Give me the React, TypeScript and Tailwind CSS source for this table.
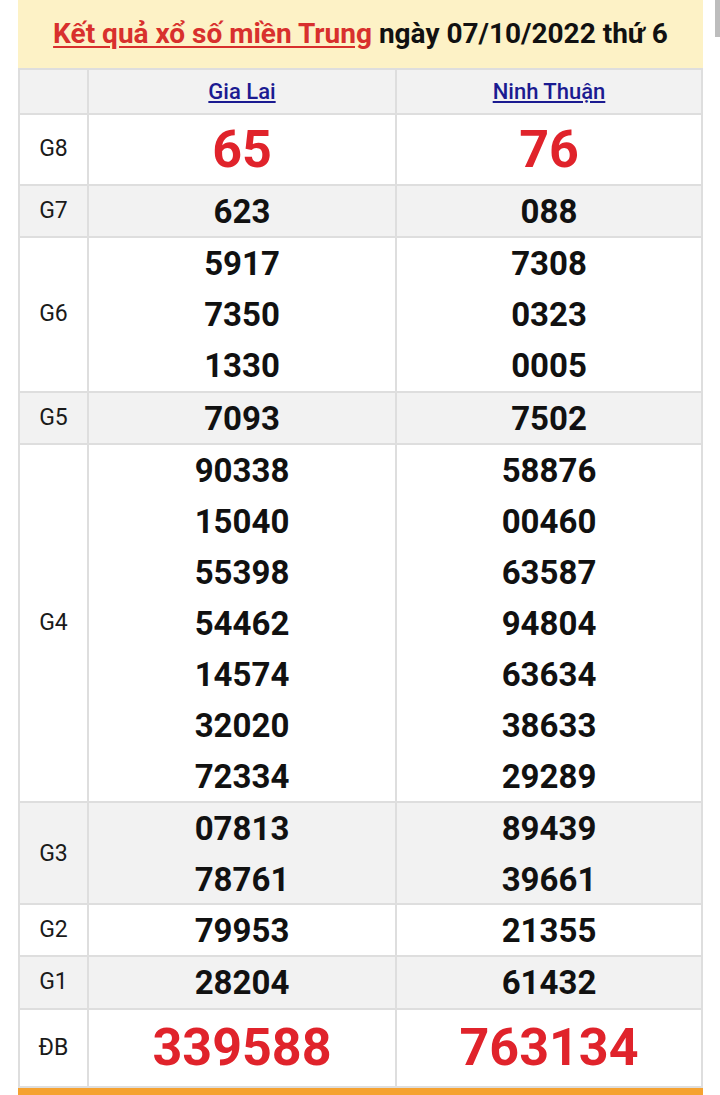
import React from 'react';

type Row = { label: string; a: string[]; b: string[]; kind: 'big' | 'normal'; h: string; bg: string };

const ROWS: Row[] = [
  { label: 'G8', a: ['65'], b: ['76'], kind: 'big', h: 'h-[71px]', bg: 'bg-white' },
  { label: 'G7', a: ['623'], b: ['088'], kind: 'normal', h: 'h-[52px]', bg: 'bg-[#f2f2f2]' },
  { label: 'G6', a: ['5917', '7350', '1330'], b: ['7308', '0323', '0005'], kind: 'normal', h: 'h-[155px]', bg: 'bg-white' },
  { label: 'G5', a: ['7093'], b: ['7502'], kind: 'normal', h: 'h-[52px]', bg: 'bg-[#f2f2f2]' },
  {
    label: 'G4',
    a: ['90338', '15040', '55398', '54462', '14574', '32020', '72334'],
    b: ['58876', '00460', '63587', '94804', '63634', '38633', '29289'],
    kind: 'normal',
    h: 'h-[358px]',
    bg: 'bg-white',
  },
  { label: 'G3', a: ['07813', '78761'], b: ['89439', '39661'], kind: 'normal', h: 'h-[102px]', bg: 'bg-[#f2f2f2]' },
  { label: 'G2', a: ['79953'], b: ['21355'], kind: 'normal', h: 'h-[52px]', bg: 'bg-white' },
  { label: 'G1', a: ['28204'], b: ['61432'], kind: 'normal', h: 'h-[53px]', bg: 'bg-[#f2f2f2]' },
  { label: 'ĐB', a: ['339588'], b: ['763134'], kind: 'big', h: 'h-[78px]', bg: 'bg-white' },
];

const Cell: React.FC<{ nums: string[]; kind: 'big' | 'normal'; last?: boolean }> = ({ nums, kind, last }) => (
  <div className={`flex flex-col items-center justify-center ${last ? '' : 'border-r-2 border-[#dedede]'}`}>
    {nums.map((n, i) =>
      kind === 'big' ? (
        <span key={i} className="text-[52px] leading-none font-bold text-[#e0232b]">{n}</span>
      ) : (
        <span key={i} className="text-[33px] leading-[51px] font-bold text-[#111]">{n}</span>
      )
    )}
  </div>
);

export default function App() {
  return (
    <div className="relative w-[720px] h-[1095px] bg-white overflow-hidden" style={{ fontFamily: 'Roboto, "Noto Sans", sans-serif' }}>
      <div className="absolute right-0 top-0 w-[5px] h-[37px] bg-[#bdbdbd]" />
      <div className="ml-[18px] w-[685px]">
        <div className="h-[68px] bg-[#fdf2c6] flex items-center justify-center">
          <h1 className="text-[28px] font-bold whitespace-nowrap">
            <a href="#" className="text-[#d8302d] underline underline-offset-[3px]">Kết quả xổ số miền Trung</a>
            <span className="text-[#111]"> ngày 07/10/2022 thứ 6</span>
          </h1>
        </div>
        <div className="border-l-2 border-r-2 border-[#dedede]">
          <div className="grid grid-cols-[69px_308px_1fr] h-[47px] bg-[#f2f2f2] border-b-2 border-t-2 border-[#dedede]">
            <div className="border-r-2 border-[#dedede]" />
            <div className="flex items-center justify-center border-r-2 border-[#dedede]">
              <a href="#" className="text-[22px] font-medium text-[#1b1b91] underline underline-offset-2">Gia Lai</a>
            </div>
            <div className="flex items-center justify-center">
              <a href="#" className="text-[22px] font-medium text-[#1b1b91] underline underline-offset-2">Ninh Thuận</a>
            </div>
          </div>
          {ROWS.map((r) => (
            <div key={r.label} className={`grid grid-cols-[69px_308px_1fr] ${r.h} ${r.bg} border-b-2 border-[#dedede]`}>
              <div className="flex items-center justify-center border-r-2 border-[#dedede] text-[23px] text-[#1a1a1a]">
                {r.label}
              </div>
              <Cell nums={r.a} kind={r.kind} />
              <Cell nums={r.b} kind={r.kind} last />
            </div>
          ))}
        </div>
        <div className="h-[8px] bg-[#f5a231]" />
      </div>
    </div>
  );
}
